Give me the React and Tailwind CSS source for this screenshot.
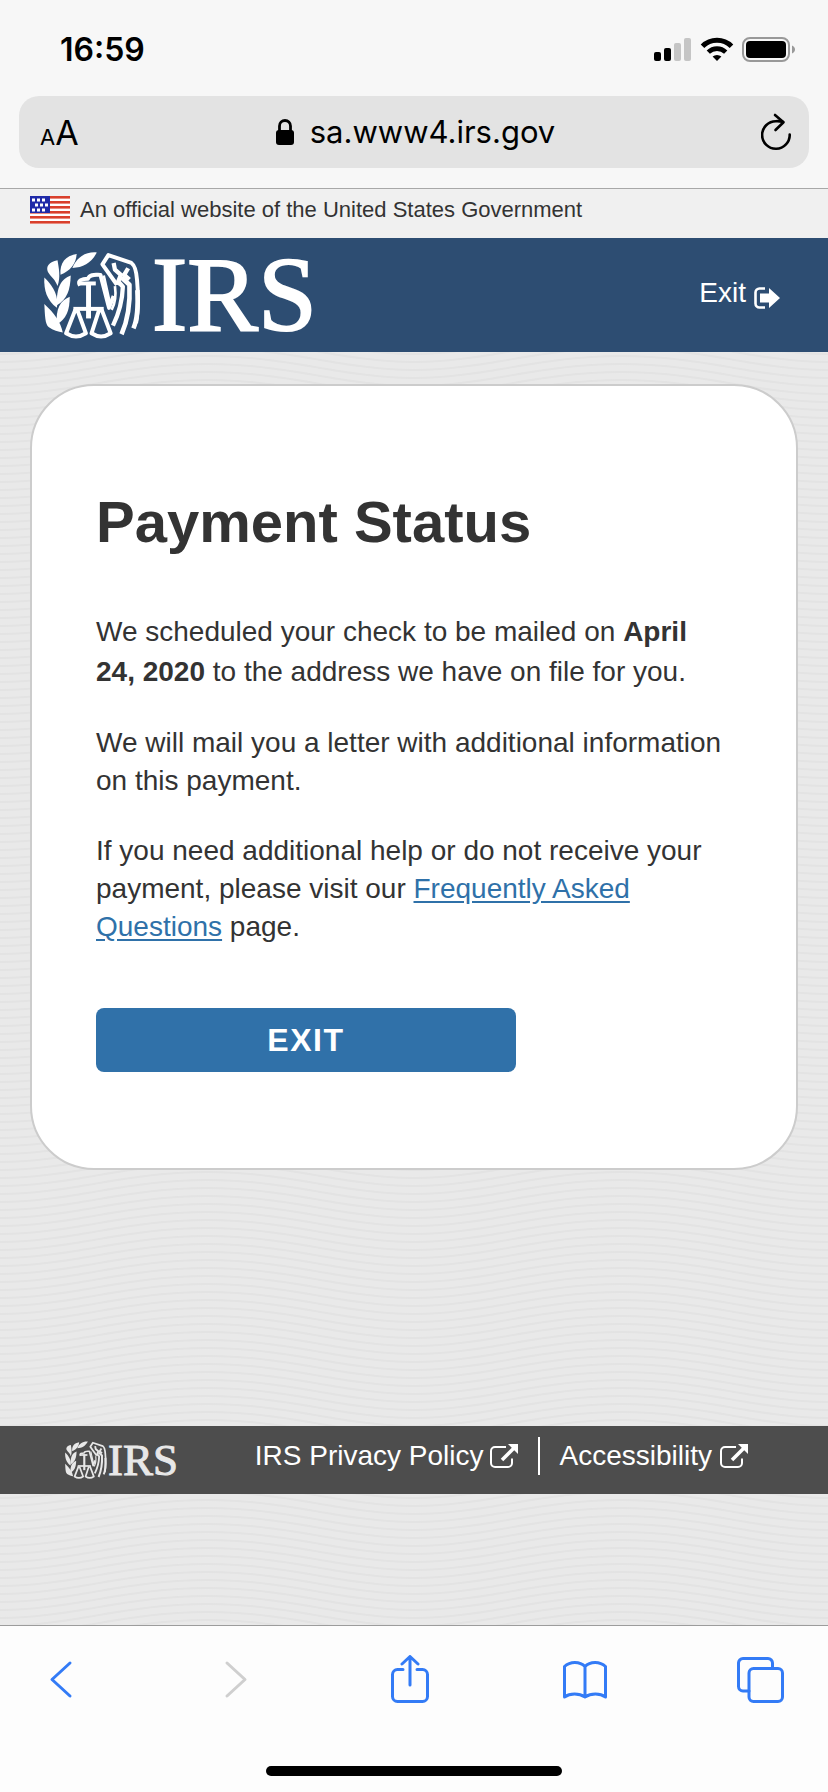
import { useId } from 'react';

function Eagle({ className }) {
  return (
    <svg viewBox="38 32 300 266" className={className} fill="none" stroke="currentColor" strokeWidth="12" strokeLinejoin="round" aria-hidden="true">
      {/* olive branch */}
      <g fill="currentColor" stroke="none">
        <path d="M201 36C168 33 140 50 127 83C160 82 186 66 201 36Z" />
        <path d="M140 41C106 46 88 68 91 104C120 92 138 72 140 41Z" />
        <path d="M82 60C56 64 46 80 53 95C62 110 76 118 82 138C92 112 86 84 82 60Z" />
        <path d="M122 106C94 116 78 140 80 196C110 180 121 150 122 106Z" />
        <path d="M42 112C40 150 50 182 80 204C86 172 72 140 42 112Z" />
        <path d="M119 170C90 182 76 206 80 254C108 238 119 212 119 170Z" />
        <path d="M42 192C44 226 44 254 56 263C68 272 85 276 98 279C92 246 72 220 42 192Z" />
      </g>
      {/* scales */}
      <path d="M176 126V236" strokeWidth="15" />
      <path d="M130 207H222" />
      <path d="M136 210L108 281Q138 300 168 281L142 210" />
      <path d="M208 210L185 281Q214 300 243 281L216 210" />
      {/* head and wing */}
      <path d="M150 136C140 120 158 116 174 116C180 100 198 104 212 104L238 204L252 168" />
      <path d="M146 130H198" />
      <path d="M262 134L218 72L236 44L306 68Q320 78 323 120Q330 200 320 250" />
      <path d="M222 106L240 186" strokeWidth="8" />
      <path d="M252 68L256 88L274 104L262 134M296 84L284 104L300 118" strokeWidth="13" />
      <path d="M266 124L280 140Q278 200 250 258" strokeWidth="13" />
      <path d="M276 112L300 134Q304 220 276 284" strokeWidth="14" />
      <path d="M324 150Q328 230 312 266" strokeWidth="14" />
      <path d="M256 138Q262 180 246 210" strokeWidth="8" />
    </svg>
  );
}

function Waves() {
  const id = useId();
  return (
    <svg className="absolute inset-0 w-full h-full" aria-hidden="true">
      <defs>
        <pattern id={id} width="414" height="8" patternUnits="userSpaceOnUse">
          <g fill="none" stroke="#e3e3e3" strokeWidth="2">
            {[-32, -24, -16, -8, 0, 8, 16].map((y) => (
              <path key={y} transform={`translate(0 ${y})`} d="M0 26C70 26 125 4 207 4S344 26 414 26" />
            ))}
          </g>
        </pattern>
      </defs>
      <rect width="100%" height="100%" fill={`url(#${id})`} />
    </svg>
  );
}

const STARS = [
  [3, 2], [8, 2], [13, 2],
  [6, 7], [11, 7], [16, 7],
  [3, 12], [8, 12], [13, 12],
];

function Flag() {
  return (
    <svg viewBox="0 0 40 28" className="w-10 h-7" role="img" aria-label="U.S. flag">
      <rect width="40" height="28" fill="#fff" />
      {[0, 5, 10, 15, 20, 25].map((y) => (
        <rect key={y} y={y} width="40" height="2.6" fill="#d9402c" />
      ))}
      <rect width="20" height="17" fill="#1f2aa8" />
      {STARS.map(([x, y]) => (
        <rect key={`${x}-${y}`} x={x - 1} y={y + 0.5} width="3" height="3" fill="#fff" />
      ))}
    </svg>
  );
}

function ExternalIcon() {
  return (
    <svg viewBox="0 0 28 24" className="w-7 h-6" aria-hidden="true">
      <path d="M16 3H5a4 4 0 0 0-4 4v12a4 4 0 0 0 4 4h13a4 4 0 0 0 4-4v-4.500" fill="none" stroke="currentColor" strokeWidth="2" />
      <path d="M12 16L24 4" stroke="currentColor" strokeWidth="3.600" />
      <path d="M18 0H28V10Z" fill="currentColor" />
    </svg>
  );
}

function StatusBar() {
  return (
    <div className="flex items-center justify-between h-24 pt-1 pl-[60px] pr-8">
      <span className="text-[32px] leading-10 font-semibold">16:59</span>
      <div className="flex items-center gap-2">
        <svg viewBox="0 0 38 26" className="w-[38px] h-[26px]" aria-hidden="true">
          <rect x="0" y="15" width="7" height="9" rx="2" />
          <rect x="10" y="11" width="7" height="13" rx="2" />
          <rect x="20" y="6" width="7" height="18" rx="2" fill="#c5c5c5" />
          <rect x="30" y="1" width="7" height="23" rx="2" fill="#c5c5c5" />
        </svg>
        <svg viewBox="0 0 34 26" className="w-[34px] h-[26px]" fill="none" stroke="#000" strokeWidth="5" aria-hidden="true">
          <path d="M2.500 9.300A20.500 20.500 0 0 1 31.500 9.300" />
          <path d="M8.300 15.200A12.400 12.400 0 0 1 25.700 15.200" strokeWidth="4.600" />
          <path d="M12.600 19.600A6.500 6.500 0 0 1 21.400 19.600L17 24Z" fill="#000" stroke="none" />
        </svg>
        <svg viewBox="0 0 54 26" className="w-[54px] h-[26px]" aria-hidden="true">
          <rect x="1" y="1" width="46" height="23" rx="7" fill="none" stroke="#999" strokeWidth="2" />
          <rect x="4" y="4" width="40" height="17" rx="4" />
          <path d="M50 8.500C54 10 54 15 50 16.500Z" fill="#999" />
        </svg>
      </div>
    </div>
  );
}

function AddressBar() {
  return (
    <div className="mx-[19px] h-[72px] pl-[21px] pr-[18px] flex items-center justify-between rounded-[20px] bg-[#e3e3e3]">
      <button type="button" aria-label="Page settings" className="w-12 flex items-baseline text-left">
        <span className="text-[22px]">A</span>
        <span className="text-[34px]">A</span>
      </button>
      <div className="flex items-center gap-4">
        <svg viewBox="0 0 18 26" className="w-[18px] h-[26px]" aria-hidden="true">
          <path d="M3.500 12V7a5.500 5.500 0 0 1 11 0v5" fill="none" stroke="#000" strokeWidth="2.800" />
          <rect y="11" width="18" height="15" rx="3" />
        </svg>
        <span className="text-[31px] leading-10">sa.www4.irs.gov</span>
      </div>
      <button type="button" aria-label="Reload" className="w-12 flex justify-end">
        <svg viewBox="0 0 30 38" className="w-[30px] h-[38px]" fill="none" stroke="#000" strokeWidth="2.600" strokeLinecap="round" strokeLinejoin="round">
          <path d="M28.700 21.500A13.800 13.800 0 1 1 15 8.200Q18.500 8 22 9" />
          <path d="M14 2L22.500 9.200L14.500 17" />
        </svg>
      </button>
    </div>
  );
}

const TOOLS = [
  { label: 'Back', paths: ['M34 8L16 24.500L34 41'] },
  { label: 'Forward', disabled: true, paths: ['M16 8L34 24.500L16 41'] },
  {
    label: 'Share',
    paths: [
      'M17 14.500H11.500A5 5 0 0 0 6.500 19.500V41.500A5 5 0 0 0 11.500 46.500H36.500A5 5 0 0 0 41.500 41.500V19.500A5 5 0 0 0 36.500 14.500H31',
      'M24 30V2M16 9L24 1.500L32 9',
    ],
  },
  {
    label: 'Bookmarks',
    paths: ['M24 11.500C19 6 9 6 3.500 11.500V42C9 38 18 38 24 42C30 38 39 38 44.500 42V11.500C39 6 29 6 24 11.500V42'],
  },
  {
    label: 'Tabs',
    paths: [
      'M13 36H7A4.500 4.500 0 0 1 2.500 31.500V8A4.500 4.500 0 0 1 7 3.500H32A4.500 4.500 0 0 1 36.500 8V13.500',
      'M17.500 13.500H42A4.500 4.500 0 0 1 46.500 18V42A4.500 4.500 0 0 1 42 46.500H17.500A4.500 4.500 0 0 1 13 42V18A4.500 4.500 0 0 1 17.500 13.500Z',
    ],
  },
];

function Toolbar() {
  return (
    <nav className="h-[167px] pt-[29px] pb-4 flex flex-col justify-between border-t border-[#9c9c9c] bg-[#fdfdfd]">
      <div className="flex justify-between pl-9 pr-11">
        {TOOLS.map((t) => (
          <button key={t.label} type="button" aria-label={t.label} disabled={t.disabled} className="text-[#337bf6] disabled:text-[#cfcfcf]">
            <svg viewBox="0 0 48 48" className="w-12 h-12" fill="none" stroke="currentColor" strokeWidth="3" strokeLinecap="round" strokeLinejoin="round">
              {t.paths.map((d) => <path key={d} d={d} />)}
            </svg>
          </button>
        ))}
      </div>
      <div className="w-[296px] h-[10px] mx-auto rounded-full bg-black" />
    </nav>
  );
}

export default function App() {
  return (
    <div className="min-h-screen flex flex-col bg-[#e9e9e9] font-['Liberation_Sans',Arial,sans-serif] text-[#333]">
      <div className="bg-[#f7f7f7] text-black pb-5 border-b border-[#a8a8a8] font-[Inter,sans-serif]">
        <StatusBar />
        <AddressBar />
      </div>

      <div className="h-[49px] pb-2 px-[30px] flex items-center gap-[10px] bg-[#f0f0f0] text-[22px]">
        <Flag />
        <span>An official website of the United States Government</span>
      </div>

      <header className="h-[114px] pl-[43px] pr-12 flex items-center justify-between bg-[#2d4d72] text-white">
        <div className="flex items-center gap-[10px]" role="img" aria-label="IRS">
          <Eagle className="w-[99px] h-[88px]" />
          <span className="font-['Liberation_Serif',serif] text-[106px] leading-none [-webkit-text-stroke:2px_white]">IRS</span>
        </div>
        <a href="#exit" className="flex items-end gap-2 pb-1 text-[28px] leading-8">
          Exit
          <svg viewBox="0 0 26 22" className="w-[26px] h-[22px]" aria-hidden="true">
            <path d="M11 1.500H5.500A4 4 0 0 0 1.500 5.500V16.500A4 4 0 0 0 5.500 20.500H11" fill="none" stroke="currentColor" strokeWidth="2.600" />
            <path d="M6 6.500H15V1L26 11L15 21V15.500H6Z" fill="currentColor" />
          </svg>
        </a>
      </header>

      <div className="relative flex-1 flex flex-col">
        <Waves />
        <main className="relative mt-8 mx-[30px] px-16 pt-[100px] pb-24 rounded-[64px] border-2 border-[#ccc] bg-white">
          <h1 className="text-[58px] leading-[72px] font-bold">Payment Status</h1>
          <div className="mt-[54px] space-y-8 text-[28px] leading-[38px]">
            <p className="leading-10">
              We scheduled your check to be mailed on <strong>April 24, 2020</strong> to the address we have on file for you.
            </p>
            <p>We will mail you a letter with additional information on this payment.</p>
            <p>
              If you need additional help or do not receive your payment, please visit our{' '}
              <a href="#faq" className="text-[#2f71a9] underline underline-offset-3">Frequently Asked Questions</a> page.
            </p>
          </div>
          <button type="button" className="mt-[62px] w-[420px] max-w-full h-16 rounded-lg bg-[#3071a9] text-white text-[32px] font-bold tracking-wider">
            EXIT
          </button>
        </main>

        <footer className="relative mt-auto mb-[131px] h-[68px] pl-16 pr-20 flex items-center justify-between bg-[#4d4d4d] text-white">
          <div className="flex items-center text-[#e8e8e8]" role="img" aria-label="IRS">
            <Eagle className="w-11 h-[38px]" />
            <span className="font-['Liberation_Serif',serif] text-[45px] leading-none [-webkit-text-stroke:1px_#e8e8e8]">IRS</span>
          </div>
          <div className="flex items-center pb-2 text-[28px]">
            <a href="#privacy" className="flex items-center gap-[6px]">IRS Privacy Policy <ExternalIcon /></a>
            <span className="w-[2px] h-[38px] mx-5 bg-white" />
            <a href="#accessibility" className="flex items-center gap-2">Accessibility <ExternalIcon /></a>
          </div>
        </footer>
      </div>

      <Toolbar />
    </div>
  );
}
